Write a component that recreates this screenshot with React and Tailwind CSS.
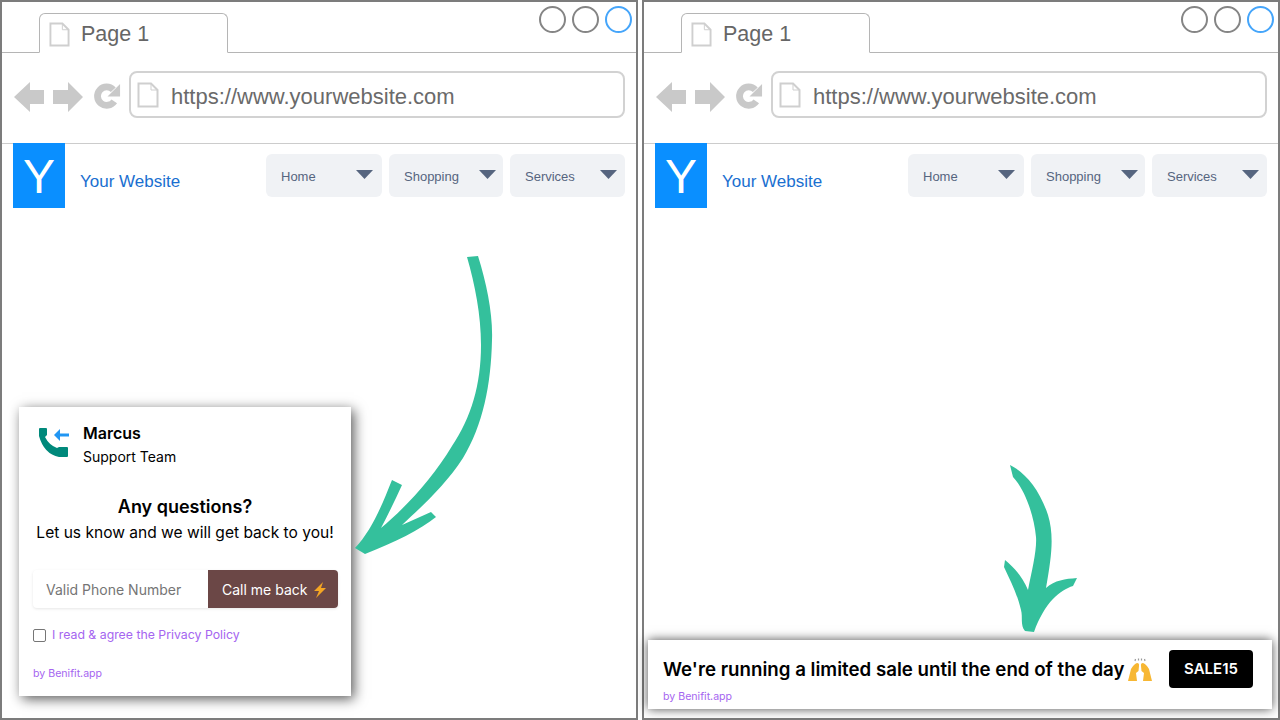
import React from "react";

const navItems = [
  { name: "Home", width: "w-[116px]" },
  { name: "Shopping", width: "w-[114px]" },
  { name: "Services", width: "w-[115px]" },
];

function FileIcon({ className }) {
  return (
    <svg viewBox="0 0 22 26" className={className} fill="none" stroke="#cfcfcf" strokeWidth="2">
      <path d="M1.5 1.5 H14 L20.5 8 V24.5 H1.5 Z" />
      <path d="M14 1.5 V8 H20.5" strokeWidth="1" />
    </svg>
  );
}

function Caret() {
  return (
    <svg viewBox="0 0 17 9" className="w-[17px] h-[9px] shrink-0 -mt-[3px]">
      <path d="M0 0 H17 L8.500 9 Z" fill="#56657f" />
    </svg>
  );
}

function BrowserChrome() {
  return (
    <>
      {/* Tab strip */}
      <div className="flex items-end h-[51px] border-b border-[#b5b5b5]">
        <div className="flex items-center gap-[11px] ml-[37px] -mb-px w-[189px] h-[40px] pl-[9px] bg-white border border-b-white border-[#b5b5b5] rounded-t-md">
          <FileIcon className="w-[21px] h-[25px] mt-[2px]" />
          <span className="text-[21.500px] leading-none text-[#666666] mt-[3px]">Page 1</span>
        </div>
        <div className="flex gap-[6px] ml-auto mr-[4px] self-start mt-[4px]">
          <div className="w-[27px] h-[27px] rounded-full border-2 border-[#858585]" />
          <div className="w-[27px] h-[27px] rounded-full border-2 border-[#858585]" />
          <div className="w-[27px] h-[27px] rounded-full border-2 border-[#45a5fa]" />
        </div>
      </div>

      {/* Address bar */}
      <div className="flex items-start h-[91px] pt-[18px] pl-[12px] border-b border-[#cccccc]">
        <svg viewBox="0 0 30 30" className="w-[30px] h-[30px] mt-[11px]">
          <path d="M0 15 L16 0 V8 H30 V22 H16 V30 Z" fill="#c9c9c9" />
        </svg>
        <svg viewBox="0 0 30 30" className="w-[30px] h-[30px] ml-[9px] mt-[11px]">
          <path d="M30 15 L15 0 V8 H0 V22 H15 V30 Z" fill="#c9c9c9" />
        </svg>
        <svg viewBox="0 0 30 30" className="w-[29px] h-[29px] ml-[10px] mt-[11px]">
          <path d="M22 20 A9.500 9.500 0 1 1 21 8" fill="none" stroke="#c9c9c9" strokeWidth="7" />
          <path d="M28 2 V15 H15 Z" fill="#c9c9c9" />
        </svg>
        <div className="flex items-center gap-[10px] ml-[7px] w-[496px] h-[47px] pl-[6px] border-2 border-[#d2d2d2] rounded-lg">
          <FileIcon className="w-[22px] h-[26px]" />
          <span className="ml-[2px] text-[22px] leading-none text-[#6a6a6a] mt-[5px]">https://www.yourwebsite.com</span>
        </div>
      </div>

      {/* Site header */}
      <div className="flex items-start -mt-px">
        <div className="flex items-start justify-center w-[52px] h-[65px] ml-[11px] bg-[#0a8fff]">
          <span className="text-[48px] leading-[68px] text-white">Y</span>
        </div>
        <span className="ml-[15px] mt-[29px] text-[17px] leading-5 text-[#1a6fd0]">Your Website</span>
        <div className="flex gap-[7px] ml-auto mr-[11px] mt-[11px]">
          {navItems.map((item) => (
            <div
              key={item.name}
              className={`flex items-center pl-[15px] h-[43px] rounded-md bg-[#f0f2f5] ${item.width}`}
            >
              <span className="w-[75px] mt-[2px] text-[13px] text-[#56657f]">{item.name}</span>
              <Caret />
            </div>
          ))}
        </div>
      </div>
    </>
  );
}

function PhoneIcon() {
  return (
    <svg viewBox="0 0 32 32" className="w-8 h-8 shrink-0">
      <path
        d="M1 2 Q1 1 2 1 H8 Q9 1 9 2 V8 L7 10 Q11 18 19 21 L21 20 H29 Q30 20 30 21 V29 Q30 30 29 30 H21 Q6 27 1 9 Z"
        fill="#00897b"
      />
      <path d="M31 8 H20" stroke="#2196f3" strokeWidth="3" />
      <path d="M16 8 L22 2 V14 Z" fill="#2196f3" />
    </svg>
  );
}

function Bolt() {
  return (
    <svg viewBox="0 0 14 16" className="w-[14px] h-4 inline-block">
      <path d="M10 0 L1 9 H6 L3 16 L13 6 H8 Z" fill="#f5a623" />
    </svg>
  );
}

function RaisedHands() {
  return (
    <svg viewBox="0 0 24 24" className="w-6 h-6 shrink-0">
      <path
        d="M0 23 L3 11 Q6 6 9 5 Q11.500 5 11 8 L10.500 13 L8 15 L9 23 Z M24 23 L21 11 Q18 6 15 5 Q12.500 5 13 8 L13.500 13 L16 15 L15 23 Z"
        fill="#f7b733"
      />
      <path d="M7 3 L7.500 1 M10.500 2.500 L10.500 0.500 M13.500 2.500 L13.500 0.500 M17 3 L16.500 1" stroke="#9a9a9a" strokeWidth="1.200" />
    </svg>
  );
}

function CallbackWidget() {
  return (
    <div className="absolute left-[17px] top-[405px] flex flex-col w-[332px] h-[289px] bg-white shadow-[3px_3px_12px_rgba(0,0,0,0.65)] font-['Inter',sans-serif] text-black">
      <div className="flex gap-[13px] mt-[20px] ml-[19px]">
        <PhoneIcon />
        <div>
          <div className="text-base leading-5 font-semibold -mt-[4px]">Marcus</div>
          <div className="text-sm leading-5 mt-[4px]">Support Team</div>
        </div>
      </div>
      <div className="mt-[28px] text-center text-lg leading-6 font-semibold">Any questions?</div>
      <div className="mt-[2px] text-center text-[15.550px] leading-6">Let us know and we will get back to you!</div>
      <div className="flex mt-[25px] ml-[14px] mr-[13px] h-[38px] rounded-sm shadow-[0_1px_3px_rgba(0,0,0,0.1)]">
        <input
          type="text"
          placeholder="Valid Phone Number"
          className="w-[175px] pl-[13px] pt-[2px] text-sm outline-none placeholder:text-[#757575]"
        />
        <button className="flex items-center gap-[6px] w-[130px] pl-[14px] pt-[2px] rounded-r-sm bg-[#6b4746] text-sm text-white">
          Call me back <Bolt />
        </button>
      </div>
      <label className="flex items-center gap-[6px] mt-[19px] ml-[14px] text-[12.300px] leading-4 text-[#a565f0]">
        <input type="checkbox" className="appearance-none w-[13px] h-[13px] border border-[#767676] rounded-[2px] bg-white" />
        I read &amp; agree the Privacy Policy
      </label>
      <div className="mt-[23px] ml-[14px] text-[10.600px] leading-4 text-[#a565f0]">by Benifit.app</div>
    </div>
  );
}

function SaleBar() {
  return (
    <div className="absolute left-[4px] top-[638px] flex items-start w-[624px] h-[69px] bg-white shadow-[0_0_10px_rgba(0,0,0,0.7)] font-['Inter',sans-serif]">
      <div className="ml-[15px] mt-[18px]">
        <div className="flex items-center gap-[4px] h-6 text-[18.700px] font-semibold text-black">
          We're running a limited sale until the end of the day <RaisedHands />
        </div>
        <div className="mt-[7px] text-[10.600px] leading-4 text-[#a565f0]">by Benifit.app</div>
      </div>
      <button className="ml-auto mr-[19px] mt-[10px] w-[84px] h-[38px] rounded bg-black text-[15px] font-semibold text-white">
        SALE15
      </button>
    </div>
  );
}

export default function App() {
  return (
    <div className="flex gap-[4px] w-[1280px] h-[720px] bg-white overflow-hidden font-['Liberation_Sans',Arial,sans-serif]">
      <section className="relative w-[638px] h-[720px] border-2 border-[#7c7c7c]">
        <BrowserChrome />
        <CallbackWidget />
        <svg viewBox="350 250 150 310" className="absolute left-[348px] top-[248px] w-[150px] h-[310px]">
          <path
            d="M467 257 L478 256 C487 285 493 315 492 340 C491 385 483 425 463 458 C445 486 420 508 402 525 L431 512 L436 517 C420 530 395 542 365 554 L355 548 C372 530 382 505 392 480 L402 485 C395 500 388 515 381 528 C405 508 433 478 452 446 C471 418 481 385 481 345 C481 315 475 285 467 257 Z"
            fill="#34c09c"
          />
        </svg>
      </section>

      <section className="relative w-[638px] h-[720px] border-2 border-[#7c7c7c]">
        <BrowserChrome />
        <SaleBar />
        <svg viewBox="1000 460 85 180" className="absolute left-[356px] top-[458px] w-[85px] h-[180px]">
          <path
            d="M1010 465 C1025 472 1040 490 1048 515 C1054 535 1052 555 1046 588 C1055 580 1065 579 1077 578 L1073 586 C1060 590 1045 602 1034 632 L1025 631 C1020 625 1023 617 1021 610 C1017 593 1010 580 1004 567 L1005 560 C1015 568 1023 578 1028 590 C1032 570 1037 550 1036 537 C1034 515 1025 490 1013 477 Z"
            fill="#34c09c"
          />
        </svg>
      </section>
    </div>
  );
}
